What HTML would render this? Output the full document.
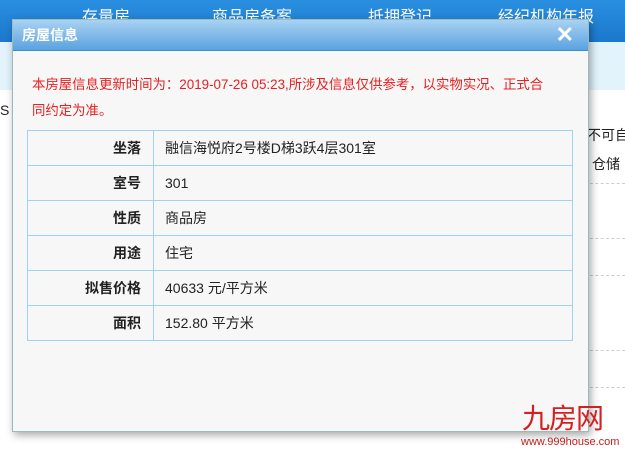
<!DOCTYPE html>
<html><head><meta charset="utf-8"><style>
*{margin:0;padding:0;box-sizing:border-box}
body{width:625px;height:452px;overflow:hidden;background:#fff;font-family:"Liberation Sans","Microsoft YaHei","Noto Sans CJK SC",sans-serif;position:relative}
.nav{position:absolute;left:0;top:0;width:625px;height:42px;background:linear-gradient(#2a8fe0,#1b78cc)}
.nav span{position:absolute;top:3px;color:#fff;font-size:16px}
.band{position:absolute;left:0;top:42px;width:625px;height:48px;background:#e3f3fb}
.bg{position:absolute;font-size:14px;color:#222;white-space:nowrap}
.dash{position:absolute;left:590px;width:35px;border-top:1px dashed #ccc}
.dlg{position:absolute;left:12px;top:19px;width:577px;height:413px;background:#f7f7f7;border:1px solid #9bb;box-shadow:2px 3px 8px rgba(0,0,0,.35)}
.hd{height:31px;background:linear-gradient(#a9d2f2,#5aa2e0);border-bottom:1px solid #3d8bd0;color:#fff;font-size:14px;font-weight:bold;line-height:31px;padding-left:9px}
.x{position:absolute;right:14px;top:2px;color:#fff;font-size:22px;font-weight:bold}
.msg{position:absolute;left:19px;top:52px;width:520px;color:#e62020;font-size:13.4px;line-height:26px}
table{position:absolute;left:14px;top:110px;width:546px;border-collapse:collapse}
td{border:1px solid #9fd2ef;height:35px;font-size:14px;color:#222}
td.l{width:126px;text-align:right;padding-right:12px;font-weight:bold}
td.v{padding-left:11px}
.logo{position:absolute;left:522px;top:404px;color:#d42020;font-size:28px;line-height:30px;letter-spacing:-1px}
.url{position:absolute;left:521px;top:436px;color:#c02020;font-size:11px}
</style></head><body>
<div class="nav"><span style="left:82px">存量房</span><span style="left:212px">商品房备案</span><span style="left:368px">抵押登记</span><span style="left:498px">经纪机构年报</span></div>
<div class="band"></div>
<div class="bg" style="left:0;top:102px">S</div>
<div class="bg" style="left:587px;top:125px">不可自</div>
<div class="bg" style="left:592px;top:154px">仓储</div>
<div class="dash" style="top:183px"></div><div class="dash" style="top:238px"></div><div class="dash" style="top:275px"></div><div class="dash" style="top:350px"></div><div class="dash" style="top:387px"></div>
<div class="dlg">
<div class="hd">房屋信息</div><div class="x">✕</div>
<div class="msg">本房屋信息更新时间为：2019-07-26 05:23,所涉及信息仅供参考，以实物实况、正式合同约定为准。</div>
<table>
<tr><td class="l">坐落</td><td class="v">融信海悦府2号楼D梯3跃4层301室</td></tr>
<tr><td class="l">室号</td><td class="v">301</td></tr>
<tr><td class="l">性质</td><td class="v">商品房</td></tr>
<tr><td class="l">用途</td><td class="v">住宅</td></tr>
<tr><td class="l">拟售价格</td><td class="v">40633 元/平方米</td></tr>
<tr><td class="l">面积</td><td class="v">152.80 平方米</td></tr>
</table>
</div>
<div class="logo">九房网</div>
<div class="url">www.999house.com</div>
</body></html>
